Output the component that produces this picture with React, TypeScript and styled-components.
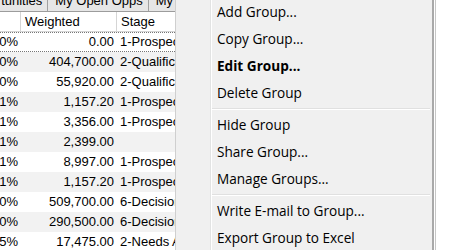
import styled, { createGlobalStyle } from "styled-components";

const GlobalStyle = createGlobalStyle`
  html, body {
    margin: 0;
    padding: 0;
    background: #fff;
  }
  body {
    width: 450px;
    height: 250px;
    overflow: hidden;
  }
`;

type Opp = { pct: string; weighted: string; stage: string };

const opps: Opp[] = [
  { pct: "10%", weighted: "0.00", stage: "1-Prospecting" },
  { pct: "20%", weighted: "404,700.00", stage: "2-Qualification" },
  { pct: "20%", weighted: "55,920.00", stage: "2-Qualification" },
  { pct: "11%", weighted: "1,157.20", stage: "1-Prospecting" },
  { pct: "11%", weighted: "3,356.00", stage: "1-Prospecting" },
  { pct: "11%", weighted: "2,399.00", stage: "" },
  { pct: "11%", weighted: "8,997.00", stage: "1-Prospecting" },
  { pct: "11%", weighted: "1,157.20", stage: "1-Prospecting" },
  { pct: "60%", weighted: "509,700.00", stage: "6-Decision Makers" },
  { pct: "60%", weighted: "290,500.00", stage: "6-Decision Makers" },
  { pct: "25%", weighted: "17,475.00", stage: "2-Needs Analysis" },
];

type MenuEntry = { label: string; bold?: boolean } | "sep";

const menuEntries: MenuEntry[] = [
  { label: "Add Group..." },
  { label: "Copy Group..." },
  { label: "Edit Group...", bold: true },
  { label: "Delete Group" },
  "sep",
  { label: "Hide Group" },
  { label: "Share Group..." },
  { label: "Manage Groups..." },
  "sep",
  { label: "Write E-mail to Group..." },
  { label: "Export Group to Excel" },
];

export default function App() {
  return (
    <>
      <GlobalStyle />
      <Page>
        <GridPane>
          <TabStrip>
            <Tab>Opportunities</Tab>
            <Tab>My Open Opps</Tab>
            <Tab>My Closed</Tab>
          </TabStrip>
          <Table>
            <HeaderRow>
              <HeaderCell />
              <HeaderCell>Weighted</HeaderCell>
              <HeaderCell>Stage</HeaderCell>
            </HeaderRow>
            {opps.map((o, i) => (
              <DataRow key={i} odd={i % 2 === 1} focused={i === 0}>
                <NumCell>{o.pct}</NumCell>
                <NumCell>{o.weighted}</NumCell>
                <TextCell>{o.stage}</TextCell>
              </DataRow>
            ))}
          </Table>
        </GridPane>
        <Menu>
          {menuEntries.map((e, i) =>
            e === "sep" ? (
              <Separator key={i} />
            ) : (
              <MenuItem key={i} bold={e.bold}>
                {e.label}
              </MenuItem>
            )
          )}
        </Menu>
        <Backdrop />
      </Page>
    </>
  );
}

const Page = styled.div`
  display: flex;
  width: 450px;
  height: 250px;
  overflow: hidden;
`;

const GridPane = styled.div`
  width: 175px;
  flex-shrink: 0;
  height: 250px;
  overflow: hidden;
  background: #fff;
  font-family: "Liberation Sans", Arial, sans-serif;
  font-size: 13px;
  color: #000;
`;

const TabStrip = styled.div`
  height: 11px;
  overflow: hidden;
  display: flex;
  align-items: flex-end;
  margin-left: -43px;
  border-bottom: 1px solid #9c9c9c;
`;

const Tab = styled.div`
  flex-shrink: 0;
  height: 17px;
  line-height: 14px;
  padding: 0 5px 0 7px;
  border: 1px solid #a0a0a0;
  border-bottom: none;
  margin-right: -1px;
  background: #e6e6e6;
  white-space: nowrap;
`;

const Table = styled.div`
  margin-left: -20px;
`;

const columns = "41px 96px 80px";

const HeaderRow = styled.div`
  display: grid;
  grid-template-columns: ${columns};
  height: 20px;
  background: #fff;
`;

const HeaderCell = styled.div`
  box-sizing: border-box;
  height: 20px;
  line-height: 19px;
  padding-left: 4px;
  border-right: 1px solid #d5d5d5;
  border-bottom: 1px solid #d5d5d5;
  white-space: nowrap;
  overflow: hidden;
`;

type DataRowProps = { odd: boolean; focused: boolean };

const DataRow = styled.div<DataRowProps>`
  display: grid;
  grid-template-columns: ${columns};
  box-sizing: border-box;
  height: 20px;
  line-height: ${({ focused }) => (focused ? "18px" : "20px")};
  background: ${({ odd }) => (odd ? "#f2f2f2" : "#fff")};
  border-top: ${({ focused }) => (focused ? "1px dotted #777" : "none")};
  border-bottom: ${({ focused }) => (focused ? "1px dotted #777" : "none")};
`;

const NumCell = styled.div`
  text-align: right;
  padding-right: 3px;
  white-space: nowrap;
  overflow: hidden;
`;

const TextCell = styled.div`
  padding-left: 3px;
  white-space: nowrap;
  overflow: hidden;
`;

const Menu = styled.div`
  width: 256px;
  flex-shrink: 0;
  height: 250px;
  border-left: 1px solid #cfcfcf;
  border-right: 2px solid #a9a9a9;
  background:
    linear-gradient(
      to right,
      transparent 34px,
      #e2e3e3 34px,
      #e2e3e3 35px,
      #fff 35px,
      #fff 36px,
      transparent 36px
    ),
    #f0f0f0;
  display: flex;
  flex-direction: column;
  font-family: "Open Sans", "Noto Sans", sans-serif;
  font-size: 13.6px;
  color: #000;
`;

const MenuItem = styled.div<{ bold?: boolean }>`
  box-sizing: border-box;
  height: 27px;
  flex-shrink: 0;
  display: flex;
  align-items: center;
  padding: 0 0 4px 41px;
  font-weight: ${({ bold }) => (bold ? 700 : 400)};
  white-space: nowrap;
`;

const Separator = styled.div`
  flex-shrink: 0;
  height: 0;
  margin: 0 2px 3px 36px;
  border-top: 1px solid #e0e0e0;
  border-bottom: 1px solid #fff;
`;

const Backdrop = styled.div`
  flex: 1;
  margin-left: 1px;
  border-left: 1px solid #c6c6c6;
  background: #fff;
`;
